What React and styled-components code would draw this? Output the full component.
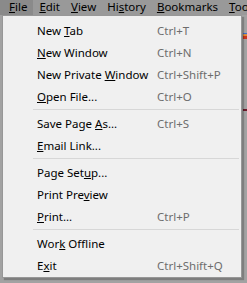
import React from 'react';
import styled, { createGlobalStyle } from 'styled-components';

const GlobalStyle = createGlobalStyle`
    html, body {
        margin: 0;
        padding: 0;
        background: #a2a2a2;
        width: 247px;
        height: 283px;
        overflow: hidden;
    }
    body {
        font-family: "Noto Sans", "Open Sans", sans-serif;
        font-size: 11.5px;
    }
`

const Window = styled.div`
    position: relative;
    width: 247px;
    height: 283px;
    overflow: hidden;
    background: #a2a2a2;
`

const MenuBar = styled.div`
    display: flex;
    height: 15px;
    background: #999999;
    color: #000;
    white-space: nowrap;
`

const BarItem = styled.div`
    padding: 0 ${p => (p.first ? '6px' : '5px')} 0 ${p => (p.first ? '9px' : '6px')};
    line-height: 13px;
    background: ${p => (p.active ? '#8a8a8a' : 'transparent')};
`

const Key = styled.span`
    text-decoration: underline;
    text-underline-offset: 1px;
`

const Content = styled.div`
    display: flex;
    flex-direction: column;
    align-items: flex-end;
    padding-top: 9px;
    gap: 58px;
`

const EdgeIcon = styled.div`
    width: 4px;
    height: ${p => p.h}px;
    overflow: hidden;
    display: flex;
`

const Menu = styled.div`
    position: absolute;
    left: 2px;
    top: 15px;
    width: 240px;
    padding: 3px 0 1px 0;
    background: #f0f0f0;
    border: 1px solid #979797;
    box-shadow: 2px 2px 1px rgba(0, 0, 0, 0.22);
    box-sizing: border-box;
    height: 263px;
`

const Row = styled.div`
    display: flex;
    align-items: center;
    height: 22px;
    padding-left: 34px;
    color: #000;
    white-space: nowrap;
`

const Label = styled.span`
    width: 120px;
`

const Shortcut = styled.span`
    color: #6d6d6d;
`

const Separator = styled.div`
    height: 1px;
    margin: 2px 2px 2px 30px;
    background: #d7d7d7;
`

const items = [
    [
        { pre: 'New ', key: 'T', post: 'ab', sc: 'Ctrl+T' },
        { pre: '', key: 'N', post: 'ew Window', sc: 'Ctrl+N' },
        { pre: 'New Private ', key: 'W', post: 'indow', sc: 'Ctrl+Shift+P' },
        { pre: '', key: 'O', post: 'pen File...', sc: 'Ctrl+O' },
    ],
    [
        { pre: 'Save Page ', key: 'A', post: 's...', sc: 'Ctrl+S' },
        { pre: '', key: 'E', post: 'mail Link...' },
    ],
    [
        { pre: 'Page Set', key: 'u', post: 'p...' },
        { pre: 'Print Pre', key: 'v', post: 'iew' },
        { pre: '', key: 'P', post: 'rint...', sc: 'Ctrl+P' },
    ],
    [
        { pre: 'Wor', key: 'k', post: ' Offline' },
        { pre: 'E', key: 'x', post: 'it', sc: 'Ctrl+Shift+Q' },
    ],
]

const bar = [
    { pre: '', key: 'F', post: 'ile' },
    { pre: '', key: 'E', post: 'dit' },
    { pre: '', key: 'V', post: 'iew' },
    { pre: 'Hi', key: 's', post: 'tory' },
    { pre: '', key: 'B', post: 'ookmarks' },
    { pre: '', key: 'T', post: 'ools' },
]

const App = () => {
    return (
        <Window>
            <GlobalStyle />
            <MenuBar>
                {bar.map((b, i) => (
                    <BarItem key={i} first={i === 0} active={i === 0}>
                        {b.pre}<Key>{b.key}</Key>{b.post}
                    </BarItem>
                ))}
            </MenuBar>
            <Content>
                <EdgeIcon h={24}>
                    <svg width="16" height="24" viewBox="0 0 16 24">
                        <rect x="0" y="0" width="16" height="5" fill="#3b6fd1" />
                        <rect x="0" y="5" width="16" height="7" fill="#e8892a" />
                        <rect x="0" y="12" width="16" height="12" fill="#c9361f" />
                    </svg>
                </EdgeIcon>
                <EdgeIcon h={8}>
                    <svg width="16" height="8" viewBox="0 0 16 8">
                        <rect x="0" y="0" width="16" height="8" fill="#6b1a2a" />
                    </svg>
                </EdgeIcon>
            </Content>
            <Menu>
                {items.map((group, gi) => (
                    <React.Fragment key={gi}>
                        {gi > 0 && <Separator />}
                        {group.map((it, i) => (
                            <Row key={i}>
                                <Label>{it.pre}<Key>{it.key}</Key>{it.post}</Label>
                                {it.sc && <Shortcut>{it.sc}</Shortcut>}
                            </Row>
                        ))}
                    </React.Fragment>
                ))}
            </Menu>
        </Window>
    );
}

export default App
